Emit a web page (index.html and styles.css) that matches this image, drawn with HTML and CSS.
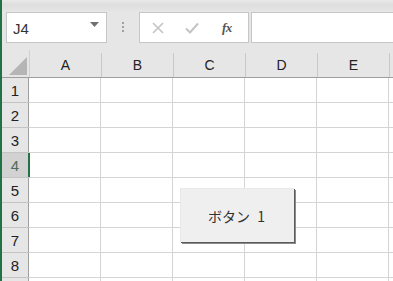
FILE: index.html
```html
<!DOCTYPE html>
<html>
<head>
<meta charset="utf-8">
<link rel="stylesheet" href="styles.css">
</head>
<body>
<div class="app">
  <div class="topstrip"></div>
  <div class="fbar">
    <div class="namebox">
      <span class="ref">J4</span>
      <svg class="dd" width="9" height="5" viewBox="0 0 9 5"><path d="M0 0H9L4.5 5Z" fill="#707070"/></svg>
    </div>
    <div class="grip"><i></i><i></i><i></i></div>
    <div class="fbtns">
      <svg class="ic" width="14" height="14" viewBox="0 0 14 14"><path d="M2 2L12 12M12 2L2 12" stroke="#c4c4c4" stroke-width="1.6"/></svg>
      <svg class="ic" width="16" height="14" viewBox="0 0 16 14"><path d="M2 7.5L6 11.5L14 2.5" stroke="#c4c4c4" stroke-width="2" fill="none"/></svg>
      <span class="fx">fx</span>
    </div>
    <div class="finput"></div>
  </div>
  <div class="sheet">
    <div class="hrow">
      <div class="corner"><svg width="18" height="18" viewBox="0 0 18 18"><path d="M18 0V18H0Z" fill="#b5b5b5"/></svg></div>
      <div class="ch">A</div><div class="ch">B</div><div class="ch">C</div><div class="ch">D</div><div class="ch">E</div><div class="ch"></div>
    </div>
    <div class="row"><div class="rh">1</div><div class="c"></div><div class="c"></div><div class="c"></div><div class="c"></div><div class="c"></div><div class="c"></div></div>
    <div class="row"><div class="rh">2</div><div class="c"></div><div class="c"></div><div class="c"></div><div class="c"></div><div class="c"></div><div class="c"></div></div>
    <div class="row"><div class="rh">3</div><div class="c"></div><div class="c"></div><div class="c"></div><div class="c"></div><div class="c"></div><div class="c"></div></div>
    <div class="row"><div class="rh sel">4</div><div class="c"></div><div class="c"></div><div class="c"></div><div class="c"></div><div class="c"></div><div class="c"></div></div>
    <div class="row"><div class="rh">5</div><div class="c"></div><div class="c"></div><div class="c"></div><div class="c"></div><div class="c"></div><div class="c"></div></div>
    <div class="row"><div class="rh">6</div><div class="c"></div><div class="c"></div><div class="c"></div><div class="c"></div><div class="c"></div><div class="c"></div></div>
    <div class="row"><div class="rh">7</div><div class="c"></div><div class="c"></div><div class="c"></div><div class="c"></div><div class="c"></div><div class="c"></div></div>
    <div class="row"><div class="rh">8</div><div class="c"></div><div class="c"></div><div class="c"></div><div class="c"></div><div class="c"></div><div class="c"></div></div>
    <div class="row"><div class="rh"></div><div class="c"></div><div class="c"></div><div class="c"></div><div class="c"></div><div class="c"></div><div class="c"></div></div>
    <div class="btn">ボタン 1</div>
  </div>
</div>
</body>
</html>
```
FILE: styles.css
```css
html, body {
  margin: 0;
  padding: 0;
  width: 393px;
  height: 281px;
  overflow: hidden;
  background: #e6e6e6;
}
.app {
  width: 391px;
  height: 281px;
  border-left: 2px solid #217346;
  overflow: hidden;
  font-family: "Liberation Sans", "Noto Sans CJK JP", sans-serif;
  color: #222;
}
.topstrip {
  height: 12px;
  background: linear-gradient(#e9e9e9, #dedede 40%, #e6e6e6);
}
.fbar {
  display: flex;
  height: 31px;
  padding-left: 4px;
  align-items: stretch;
}
.namebox {
  width: 101px;
  background: #fff;
  border: 1px solid #c6c6c6;
  display: flex;
  align-items: center;
  justify-content: space-between;
  padding: 0 6px 0 6px;
  box-sizing: border-box;
}
.ref {
  font-size: 15px;
  color: #333;
  margin-top: 2px;
}
.dd { margin-top: -6px; margin-right: 1px; }
.grip {
  width: 32px;
  display: flex;
  flex-direction: column;
  align-items: center;
  justify-content: center;
  gap: 2px;
  margin-top: -1px;
}
.grip i {
  width: 2px;
  height: 2px;
  background: #a0a0a0;
  display: block;
}
.fbtns {
  width: 110px;
  box-sizing: border-box;
  background: #fff;
  border: 1px solid #c6c6c6;
  display: flex;
  align-items: center;
  padding-left: 11px;
}
.fbtns .ic { margin-right: 20px; }
.fbtns .ic:nth-child(2) { margin-right: 22px; margin-left: -1px; }
.fx {
  font-family: "Liberation Serif", serif;
  font-style: italic;
  font-weight: bold;
  font-size: 13px;
  color: #555;
  margin-top: 1px;
  letter-spacing: -0.5px;
}
.finput {
  flex: 1;
  margin-left: 2px;
  background: #fff;
  border: 1px solid #c6c6c6;
  border-right: none;
}
.sheet {
  position: relative;
  margin-top: 7px;
}
.hrow, .row {
  display: flex;
}
.hrow {
  height: 27px;
  border-bottom: 1px solid #9e9e9e;
}
.corner {
  width: 28px;
  flex: none;
  border-right: 1px solid #d0d0d0;
  display: flex;
  align-items: flex-end;
  justify-content: flex-end;
  padding: 0 2px 2px 0;
  box-sizing: border-box;
}
.ch {
  width: 71px;
  flex: none;
  border-right: 1px solid #c8c8c8;
  display: flex;
  align-items: center;
  justify-content: center;
  font-size: 14px;
  color: #222;
  padding-top: 2px;
  background: #e6e6e6;
}
.hrow .ch { border-image: linear-gradient(transparent 0 3px, #c8c8c8 3px) 0 1 0 0; }
.row {
  height: 24px;
  border-bottom: 1px solid #d4d4d4;
  background: #fff;
}
.rh {
  width: 27px;
  flex: none;
  background: #e6e6e6;
  border-right: 1px solid #9e9e9e;
  display: flex;
  align-items: center;
  justify-content: center;
  font-size: 15px;
  color: #222;
  box-shadow: 0 1px 0 #c4c4c4;
  position: relative;
  z-index: 1;
  padding-top: 1px;
  box-sizing: border-box;
}
.rh.sel {
  background: #d2d2d2;
  color: #4f6b5c;
  border-right: 2px solid #217346;
  width: 28px;
}
.c {
  width: 71px;
  flex: none;
  border-right: 1px solid #d4d4d4;
}
.row .rh.sel + .c { width: 70px; }
.btn {
  position: absolute;
  left: 178px;
  top: 138px;
  width: 114px;
  height: 54px;
  background: #efefef;
  border-top: 1px solid #e8e8e8;
  border-left: 1px solid #e8e8e8;
  box-shadow: 1px 1px 0 #5c5c5c, 2px 2px 0 #8a8a8a;
  display: flex;
  align-items: center;
  justify-content: center;
  font-family: "Noto Sans CJK JP", sans-serif;
  font-size: 14px;
  word-spacing: 4px;
  color: #333;
  box-sizing: border-box;
  padding-right: 2px;
}
```
